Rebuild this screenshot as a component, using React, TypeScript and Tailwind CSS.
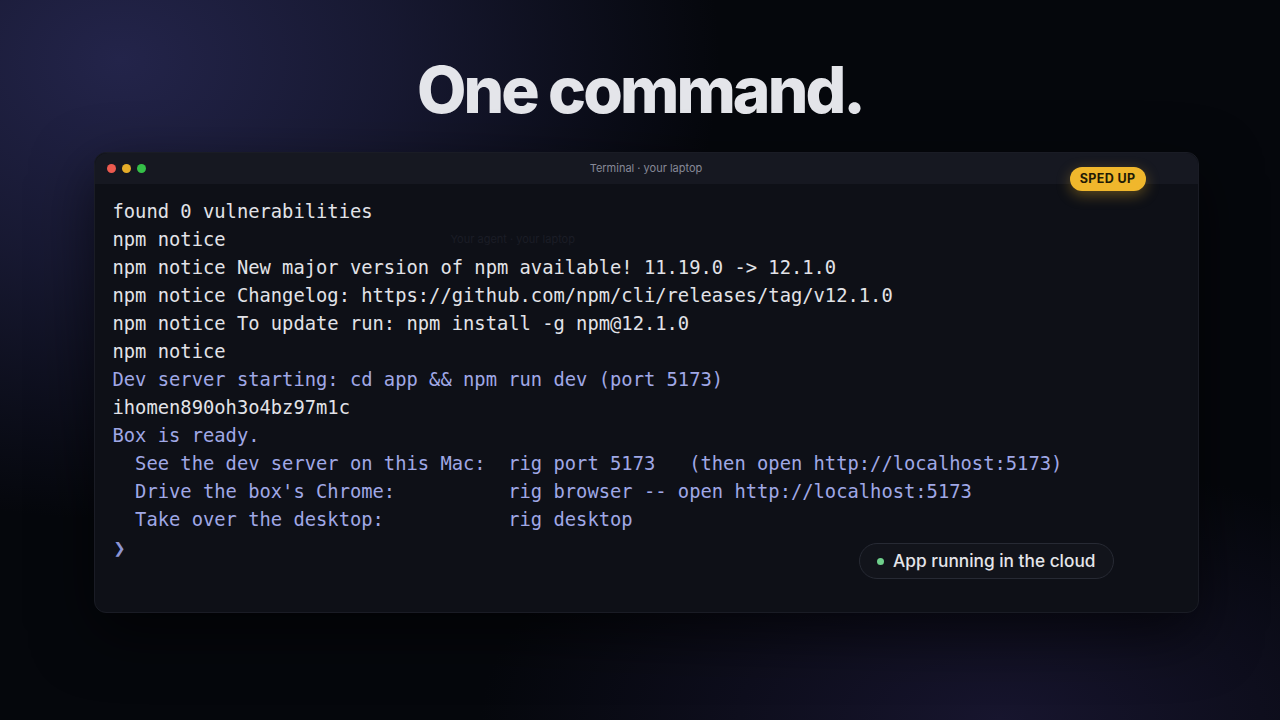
import React from "react";

const mono = { fontFamily: '"DejaVu Sans Mono", "Liberation Mono", monospace' };
const sans = { fontFamily: 'Inter, "Noto Sans", sans-serif' };

type Line = { t: string; c: "w" | "b" };

const lines: Line[] = [
  { t: "found 0 vulnerabilities", c: "w" },
  { t: "npm notice", c: "w" },
  { t: "npm notice New major version of npm available! 11.19.0 -> 12.1.0", c: "w" },
  { t: "npm notice Changelog: https://github.com/npm/cli/releases/tag/v12.1.0", c: "w" },
  { t: "npm notice To update run: npm install -g npm@12.1.0", c: "w" },
  { t: "npm notice", c: "w" },
  { t: "Dev server starting: cd app && npm run dev (port 5173)", c: "b" },
  { t: "ihomen890oh3o4bz97m1c", c: "w" },
  { t: "Box is ready.", c: "b" },
  { t: "  See the dev server on this Mac:  rig port 5173   (then open http://localhost:5173)", c: "b" },
  { t: "  Drive the box's Chrome:          rig browser -- open http://localhost:5173", c: "b" },
  { t: "  Take over the desktop:           rig desktop", c: "b" },
];

export default function App() {
  return (
    <div
      className="w-[1280px] h-[720px] overflow-hidden flex flex-col items-center bg-[#05070c]"
      style={{
        ...sans,
        backgroundImage:
          "radial-gradient(ellipse 600px 460px at 120px 60px, #23244a 0%, rgba(35,36,74,0.6) 45%, rgba(5,7,12,0) 100%), radial-gradient(ellipse 520px 260px at 1000px 720px, #17152e 0%, rgba(23,21,46,0.5) 50%, rgba(5,7,12,0) 100%)",
      }}
    >
      <h1 className="mt-[52px] text-[64px] leading-[76px] font-extrabold tracking-[-0.045em] text-[#e4e5ea]">
        One command.
      </h1>
      <div className="relative mt-[24px] ml-[12px] w-[1105px] h-[461px] rounded-[12px] bg-[#0e1017] border border-[#1a1c25] shadow-[0_20px_60px_rgba(0,0,0,0.6)] flex flex-col overflow-visible">
        <div className="relative h-[31px] shrink-0 rounded-t-[12px] bg-[#161821] flex items-center px-[12px]">
          <div className="flex gap-[6px]">
            <span className="w-[9px] h-[9px] rounded-full bg-[#ec5a4f]" />
            <span className="w-[9px] h-[9px] rounded-full bg-[#e5ad29]" />
            <span className="w-[9px] h-[9px] rounded-full bg-[#35c048]" />
          </div>
          <div className="absolute inset-0 flex items-center justify-center text-[11px] text-[#868997]">
            Terminal · your laptop
          </div>
        </div>
        <div className="absolute top-[14px] right-[52px] h-[24px] px-[10px] rounded-full bg-[#f0b72c] text-[#221a05] text-[12.5px] font-bold tracking-[0.03em] flex items-center shadow-[0_4px_14px_rgba(240,183,44,0.35)]">
          SPED UP
        </div>
        <div className="relative flex-1 pt-[14px] pl-[18px]" style={mono}>
          <div className="absolute left-[356px] top-[47px] text-[11px] text-[#1b1d26]" style={sans}>
            Your agent · your laptop
          </div>
          {lines.map((l, i) => (
            <div
              key={i}
              className={`whitespace-pre text-[18.8px] leading-[28px] ${l.c === "w" ? "text-[#e2e3e8]" : "text-[#a0a8e6]"}`}
            >
              {l.t}
            </div>
          ))}
          <div className="text-[20px] leading-[28px] font-bold text-[#8d95d4] pl-[1px]">❯</div>
          <div
            className="absolute right-[84px] bottom-[33px] h-[36px] px-[17px] rounded-full border border-[#272a34] bg-[#12141b] flex items-center gap-[9px] text-[17.3px] font-medium text-[#e4e5ea]"
            style={sans}
          >
            <span className="w-[7px] h-[7px] rounded-full bg-[#6fd08c]" />
            App running in the cloud
          </div>
        </div>
      </div>
    </div>
  );
}
